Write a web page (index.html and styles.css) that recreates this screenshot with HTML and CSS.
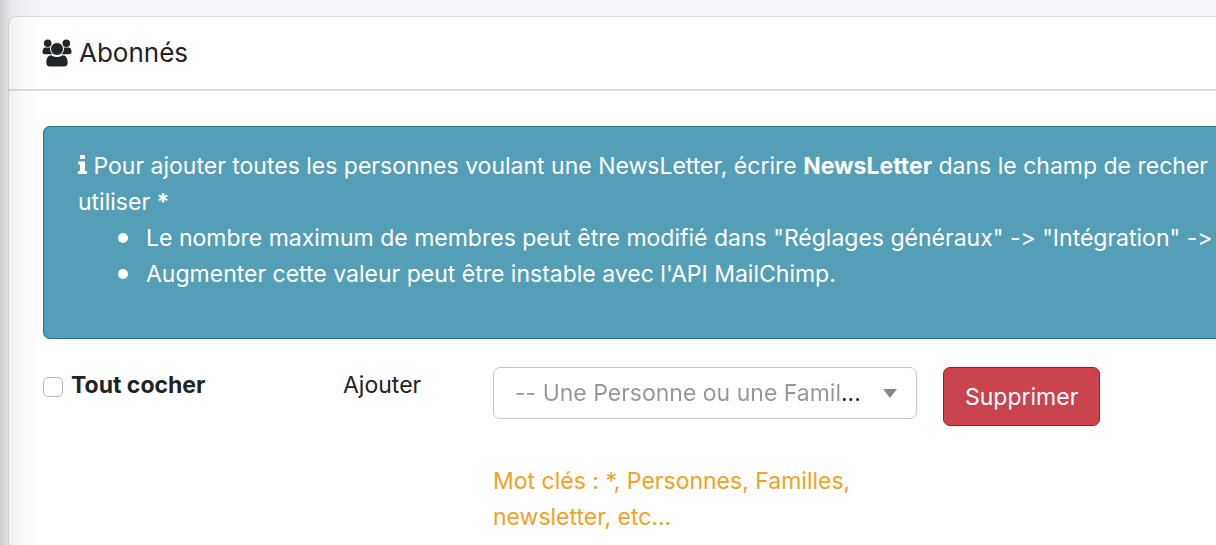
FILE: index.html
```html
<!DOCTYPE html>
<html lang="fr">
<head>
<meta charset="utf-8">
<meta name="viewport" content="width=device-width, initial-scale=1">
<title>Abonnés</title>
<link rel="stylesheet" href="styles.css">
</head>
<body>
<main class="page">
  <section class="card">
    <header class="card-header">
      <svg class="icon-users" viewBox="0 0 30 28" aria-hidden="true">
        <circle cx="5.700" cy="4.200" r="3.800"/>
        <circle cx="24.300" cy="4.200" r="3.800"/>
        <path d="M3.500 8.500h5c.1 3.300.9 5.200 2.400 6.800H3C1 15.300.4 14.200.5 12.500.6 10.500 1.500 8.500 3.500 8.500zM26.500 8.500h-5c-.1 3.300-.9 5.200-2.400 6.800H27c2 0 2.600-1.100 2.500-2.800-.1-2-1-4-3-4z"/>
        <path d="M9.200 16.200c3.600 2.400 8 2.400 11.600 0 3.300 0 4.900 3.400 4.900 7.400 0 2.600-1.300 4-3.500 4H7.800c-2.200 0-3.500-1.400-3.500-4 0-4 1.600-7.400 4.900-7.400z"/>
        <circle class="head" cx="15" cy="10" r="6.500"/>
      </svg>
      <h1 class="card-title">Abonnés</h1>
    </header>
    <div class="card-body">
      <div class="alert">
        <p class="alert-text"><svg class="icon-info" viewBox="0 0 9 19" aria-hidden="true"><path d="M2 0h5v4H2zM0 6.500h7V16h2v3H0v-3h2V9.500H0z"/></svg> Pour ajouter toutes les personnes voulant une NewsLetter, écrire <b>NewsLetter</b> dans le champ de recher<br>utiliser <b>*</b></p>
        <ul class="alert-list">
          <li>Le nombre maximum de membres peut être modifié dans "Réglages généraux" -&gt; "Intégration" -&gt;</li>
          <li>Augmenter cette valeur peut être instable avec l'API MailChimp.</li>
        </ul>
      </div>
      <form class="toolbar">
        <label class="check-all"><input type="checkbox" class="checkbox">Tout cocher</label>
        <label class="add-label" for="member">Ajouter</label>
        <div class="add-field">
          <div class="select-box">
            <select id="member" class="select">
              <option>-- Une Personne ou une Famil...</option>
            </select>
            <svg class="caret" viewBox="0 0 14 9" aria-hidden="true"><path d="M0 0h14L7 9z"/></svg>
          </div>
          <p class="hint">Mot clés : *, Personnes, Familles, newsletter, etc...</p>
        </div>
        <button type="button" class="btn-danger">Supprimer</button>
      </form>
    </div>
  </section>
</main>
</body>
</html>
```
FILE: styles.css
```css
* {
  box-sizing: border-box;
}

body {
  margin: 0;
  background: #f4f5fa;
  color: #1f2328;
  font: 23px/36px Inter, "Liberation Sans", sans-serif;
  font-variant-ligatures: none;
  overflow: hidden;
}

.page {
  position: relative;
  display: flex;
  min-height: 100vh;
  padding: 16px 0 0 8px;
}

.page::after {
  content: "";
  position: absolute;
  inset: 0 auto 0 0;
  width: 44px;
  background: linear-gradient(to right, rgba(0, 0, 0, .16), rgba(0, 0, 0, .06) 10px, rgba(0, 0, 0, .02) 24px, transparent);
  pointer-events: none;
}

.card {
  flex: 1;
  min-width: 0;
  background: #fff;
  border: 1px solid #dcdde0;
  border-right: 0;
  border-bottom: 0;
  border-radius: 8px 0 0 0;
}

.card-header {
  display: flex;
  align-items: center;
  gap: 7px;
  padding: 18px 33px;
  border-bottom: 2px solid #dedfe0;
}

.icon-users {
  width: 30px;
  height: 28px;
  fill: #212529;
}

.icon-users .head {
  stroke: #fff;
  stroke-width: 1;
}

.card-title {
  margin: 0;
  font-size: 26px;
  font-weight: 400;
}

.card-body {
  padding: 35px 0 0 34px;
}

.alert {
  padding: 21px 0 28px 34px;
  margin-bottom: 28px;
  min-height: 213px;
  background: #549fb7;
  border: 1px solid #0b8098;
  border-right: 0;
  border-radius: 7px 0 0 7px;
  color: #fff;
  white-space: nowrap;
  overflow: hidden;
}

.alert-text {
  margin: 0;
}

.icon-info {
  width: 9px;
  height: 19px;
  fill: #fff;
}

.alert b {
  font-weight: 700;
}

.alert-list {
  margin: 0;
  padding: 0 0 0 40px;
  list-style: none;
}

.alert-list li {
  display: flex;
  align-items: center;
  gap: 18px;
}

.alert-list li::before {
  content: "";
  width: 10px;
  height: 10px;
  border-radius: 50%;
  background: #fff;
}

.toolbar {
  display: grid;
  grid-template-columns: 300px 150px 424px auto;
  justify-content: start;
  align-items: start;
}

.check-all {
  display: flex;
  align-items: center;
  gap: 8px;
  font-weight: 700;
}

.checkbox {
  appearance: none;
  width: 20px;
  height: 20px;
  margin: 4px 0 0;
  background: #fff;
  border: 1px solid #b8b8b8;
  border-radius: 5px;
}

.select-box {
  display: grid;
  grid-template-columns: 1fr auto;
  align-items: center;
  height: 52px;
  padding: 0 19px 0 21px;
  background: #fff;
  border: 1px solid #c2c7d0;
  border-radius: 7px;
}

.select {
  appearance: none;
  min-width: 0;
  padding: 0;
  border: 0;
  background: linear-gradient(to right, #969696 326px, #222 326px);
  background-clip: text;
  color: transparent;
  font: inherit;
}

.caret {
  width: 14px;
  height: 9px;
  fill: #888;
}

.hint {
  max-width: 390px;
  margin: 44px 0 0;
  color: #f0a225;
}

.btn-danger {
  height: 59px;
  margin-left: 26px;
  padding: 0 21px;
  background: #c9444c;
  border: 1px solid #b90f1b;
  border-radius: 7px;
  color: #fff;
  font: inherit;
}
```
